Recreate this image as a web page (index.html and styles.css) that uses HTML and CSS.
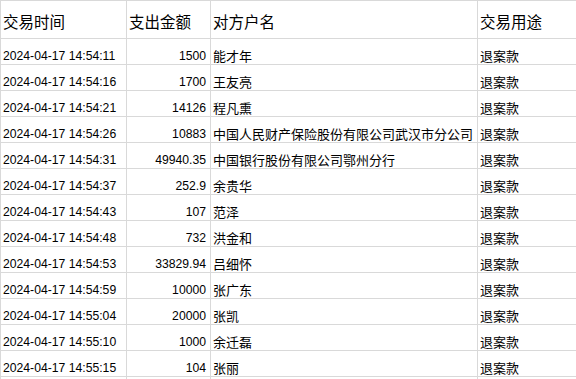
FILE: index.html
```html
<!DOCTYPE html>
<html lang="zh-CN">
<head>
<meta charset="utf-8">
<title>交易明细</title>
<link rel="stylesheet" href="styles.css">
</head>
<body>
<div class="sheet">
  <div class="cell head">交易时间</div>
  <div class="cell head">支出金额</div>
  <div class="cell head">对方户名</div>
  <div class="cell head">交易用途</div>

  <div class="cell num">2024-04-17 14:54:11</div><div class="cell num right">1500</div><div class="cell cjk">能才年</div><div class="cell cjk">退案款</div>
  <div class="cell num">2024-04-17 14:54:16</div><div class="cell num right">1700</div><div class="cell cjk">王友亮</div><div class="cell cjk">退案款</div>
  <div class="cell num">2024-04-17 14:54:21</div><div class="cell num right">14126</div><div class="cell cjk">程凡熏</div><div class="cell cjk">退案款</div>
  <div class="cell num">2024-04-17 14:54:26</div><div class="cell num right">10883</div><div class="cell cjk">中国人民财产保险股份有限公司武汉市分公司</div><div class="cell cjk">退案款</div>
  <div class="cell num">2024-04-17 14:54:31</div><div class="cell num right">49940.35</div><div class="cell cjk">中国银行股份有限公司鄂州分行</div><div class="cell cjk">退案款</div>
  <div class="cell num">2024-04-17 14:54:37</div><div class="cell num right">252.9</div><div class="cell cjk">余贵华</div><div class="cell cjk">退案款</div>
  <div class="cell num">2024-04-17 14:54:43</div><div class="cell num right">107</div><div class="cell cjk">范泽</div><div class="cell cjk">退案款</div>
  <div class="cell num">2024-04-17 14:54:48</div><div class="cell num right">732</div><div class="cell cjk">洪金和</div><div class="cell cjk">退案款</div>
  <div class="cell num">2024-04-17 14:54:53</div><div class="cell num right">33829.94</div><div class="cell cjk">吕细怀</div><div class="cell cjk">退案款</div>
  <div class="cell num">2024-04-17 14:54:59</div><div class="cell num right">10000</div><div class="cell cjk">张广东</div><div class="cell cjk">退案款</div>
  <div class="cell num">2024-04-17 14:55:04</div><div class="cell num right">20000</div><div class="cell cjk">张凯</div><div class="cell cjk">退案款</div>
  <div class="cell num">2024-04-17 14:55:10</div><div class="cell num right">1000</div><div class="cell cjk">余迁磊</div><div class="cell cjk">退案款</div>
  <div class="cell num">2024-04-17 14:55:15</div><div class="cell num right">104</div><div class="cell cjk">张丽</div><div class="cell cjk">退案款</div>
  <div class="cell"></div><div class="cell"></div><div class="cell"></div><div class="cell"></div>
</div>
</body>
</html>
```
FILE: styles.css
```css
html, body {
  margin: 0;
  padding: 0;
  background: #ffffff;
  overflow: hidden;
}

.sheet {
  display: grid;
  grid-template-columns: 125px 83px 266px 1fr;
  grid-template-rows: 37px;
  grid-auto-rows: 25px;
  gap: 1px;
  padding: 1px 0 0 1px;
  width: 575px;
  height: 378px;
  overflow: hidden;
  background: #d9d9d9;
  color: #000000;
}

.cell {
  background: #ffffff;
  display: flex;
  align-items: flex-end;
  padding: 0 4px 1px 2px;
  white-space: nowrap;
  overflow: hidden;
}

.head {
  font-family: "Noto Sans CJK SC", "Noto Sans", sans-serif;
  font-size: 15.5px;
  line-height: 18px;
  padding-bottom: 8px;
}

.num {
  font-family: "Liberation Sans", Arial, sans-serif;
  font-size: 12.2px;
  line-height: 14px;
  padding-bottom: 1px;
}

.right {
  justify-content: flex-end;
}

.cjk {
  font-family: "Noto Sans CJK SC", "Noto Sans", sans-serif;
  font-size: 13px;
  line-height: 14px;
  padding-bottom: 1px;
  padding-left: 2px;
}
```
